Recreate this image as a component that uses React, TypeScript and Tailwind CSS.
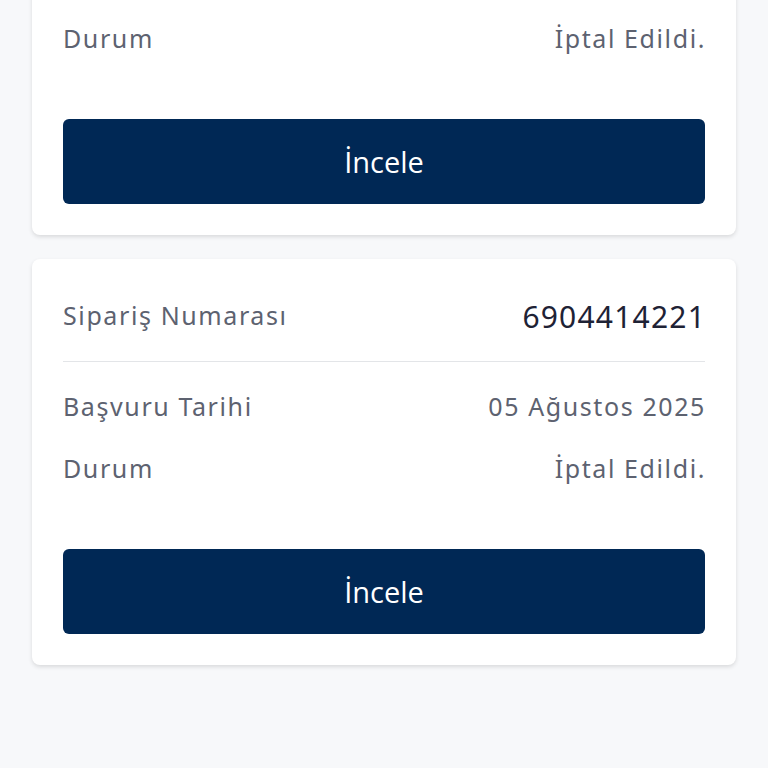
import React from 'react';

type Order = { no: string; date: string; status: string };

const orders: Order[] = [
  { no: '6904414220', date: '05 Ağustos 2025', status: 'İptal Edildi.' },
  { no: '6904414221', date: '05 Ağustos 2025', status: 'İptal Edildi.' },
];

function OrderCard({ o, first }: { o: Order; first?: boolean }) {
  return (
    <div
      className={`rounded-lg bg-white px-[31px] pt-[31px] pb-[31px] shadow-[0_2px_4px_rgba(0,0,0,0.12)] ${first ? 'mt-[-171px]' : ''}`}
    >
      <div className="flex h-[52px] items-center justify-between">
        <span className="text-[25px] tracking-[1.6px] text-[#5d6270]">Sipariş Numarası</span>
        <span className="mr-[-1px] text-[30px] tracking-[1.2px] text-[#1e2235]">{o.no}</span>
      </div>
      <div className="mt-[19px] h-px bg-[#e3e5e8]" />
      <div className="mt-[25px] flex h-[40px] items-center justify-between">
        <span className="text-[25px] tracking-[1.6px] text-[#5d6270]">Başvuru Tarihi</span>
        <span className="mr-[-1px] text-[25px] tracking-[1.6px] text-[#5d6270]">{o.date}</span>
      </div>
      <div className="mt-[22px] flex h-[40px] items-center justify-between">
        <span className="text-[25px] tracking-[1.6px] text-[#5d6270]">Durum</span>
        <span className="mr-[-1px] text-[25px] tracking-[1.6px] text-[#5d6270]">{o.status}</span>
      </div>
      <button className="mt-[60px] flex h-[85px] w-full items-center justify-center rounded-md bg-[#002855] text-[29px] text-white [font-family:'Open_Sans',sans-serif]">
        İncele
      </button>
    </div>
  );
}

export default function App() {
  return (
    <div className="h-[768px] overflow-hidden bg-[#f7f8fa] px-[32px] [font-family:'Noto_Sans',sans-serif]">
      <div className="flex flex-col gap-[24px]">
        {orders.map((o, i) => (
          <OrderCard key={o.no} o={o} first={i === 0} />
        ))}
      </div>
    </div>
  );
}
